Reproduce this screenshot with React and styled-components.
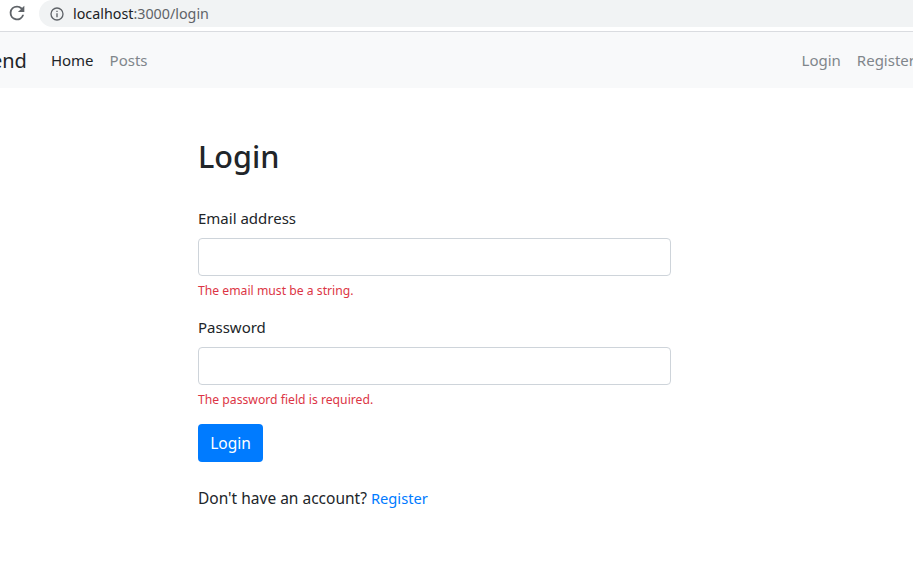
import React from "react"
import styled, { createGlobalStyle } from "styled-components"

const Global = createGlobalStyle`
  html, body {
    margin: 0;
    padding: 0;
    overflow: hidden;
    background: #fff;
  }
  body {
    font-family: "Noto Sans", "Noto Sans CJK KR", "Open Sans", sans-serif;
    color: #212529;
  }
`

const Page = styled.div`
  width: 913px;
  height: 585px;
  overflow: hidden;
`

const Toolbar = styled.div`
  height: 31px;
  border-bottom: 1px solid #dadce0;
  display: flex;
  align-items: flex-start;
  box-sizing: content-box;
`

const Reload = styled.svg`
  width: 22px;
  height: 22px;
  margin: 2px 11px 0 6px;
  fill: #5f6368;
`

const Omnibox = styled.div`
  flex: 1;
  height: 27px;
  background: #f1f3f4;
  border-radius: 14px 0 0 14px;
  display: flex;
  align-items: center;
  padding-left: 10px;
  font-size: 14.3px;
  color: #202124;
`

const InfoIcon = styled.svg`
  width: 16px;
  height: 16px;
  margin-right: 8px;
  fill: #5f6368;
`

const Dim = styled.span`
  color: #5f6368;
`

const Navbar = styled.nav`
  height: 56px;
  background: #f8f9fa;
  display: flex;
  align-items: center;
  justify-content: space-between;
  margin-left: -59px;
  margin-right: -18px;
  font-size: 15px;
`

const Links = styled.div`
  display: flex;
  align-items: center;
`

const Brand = styled.span`
  font-size: 20px;
  color: #212529;
  margin-right: 24px;
`

const NavLink = styled.a`
  color: ${p => (p.$active ? "#212529" : "#80868b")};
  text-decoration: none;
  margin-right: 16px;
  cursor: pointer;
`

const Main = styled.main`
  width: 473px;
  margin-left: 198px;
  padding-top: 46px;
`

const Title = styled.h1`
  margin: 0 0 28px;
  font-size: 30.6px;
  line-height: 44px;
  font-weight: 500;
  color: #212529;
`

const Field = styled.div`
  margin-bottom: 14px;
`

const Label = styled.label`
  display: block;
  font-size: 15px;
  line-height: 24px;
  margin-bottom: 8px;
`

const Input = styled.input`
  display: block;
  width: 100%;
  height: 38px;
  box-sizing: border-box;
  border: 1px solid #ced4da;
  border-radius: 4px;
  background: #fff;
`

const Error = styled.div`
  margin-top: 5px;
  font-size: 12.2px;
  line-height: 20px;
  color: #dc3545;
`

const Button = styled.button`
  display: block;
  width: 65px;
  height: 38px;
  padding: 0;
  border: 0;
  border-radius: 4px;
  background: #007bff;
  color: #fff;
  font: inherit;
  font-size: 15.5px;
  cursor: pointer;
`

const Footer = styled.p`
  margin: 24px 0 0;
  font-size: 15.5px;
  line-height: 24px;
`

const Anchor = styled.a`
  color: #007bff;
  font-size: 14.7px;
  text-decoration: none;
`

const App = () => {
  return (
    <Page>
      <Global />
      <Toolbar>
        <Reload viewBox="0 0 24 24">
          <path d="M17.65 6.35A7.96 7.96 0 0 0 12 4a8 8 0 1 0 7.73 10h-2.08A6 6 0 1 1 12 6c1.66 0 3.14.69 4.22 1.78L13 11h7V4l-2.35 2.35z" />
        </Reload>
        <Omnibox>
          <InfoIcon viewBox="0 0 24 24">
            <path d="M11 7h2v2h-2zm0 4h2v6h-2zm1-9a10 10 0 1 0 0 20 10 10 0 0 0 0-20zm0 18a8 8 0 1 1 0-16 8 8 0 0 1 0 16z" />
          </InfoIcon>
          <span>localhost<Dim>:3000/login</Dim></span>
        </Omnibox>
      </Toolbar>
      <Navbar>
        <Links>
          <Brand>Frontend</Brand>
          <NavLink $active>Home</NavLink>
          <NavLink>Posts</NavLink>
        </Links>
        <Links>
          <NavLink>Login</NavLink>
          <NavLink>Register</NavLink>
        </Links>
      </Navbar>
      <Main>
        <Title>Login</Title>
        <Field>
          <Label>Email address</Label>
          <Input type="email" />
          <Error>The email must be a string.</Error>
        </Field>
        <Field>
          <Label>Password</Label>
          <Input type="password" />
          <Error>The password field is required.</Error>
        </Field>
        <Button>Login</Button>
        <Footer>Don't have an account? <Anchor>Register</Anchor></Footer>
      </Main>
    </Page>
  )
}

export default App
